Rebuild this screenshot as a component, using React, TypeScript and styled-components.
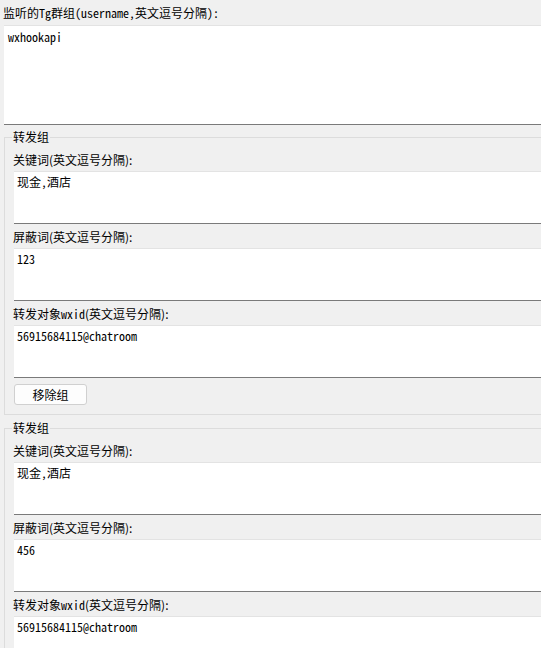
import React from 'react';
import styled, { createGlobalStyle } from 'styled-components';

const GlobalStyle = createGlobalStyle`
  html, body {
    margin: 0;
    padding: 0;
    background: #f0f0f0;
    overflow: hidden;
  }
  body {
    font-family: "Noto Sans CJK SC", sans-serif;
    font-size: 12px;
    color: #000;
  }
`;

const MONO = `"Noto Sans Mono CJK SC", "Noto Sans CJK SC", "Liberation Mono", monospace`;

const Page = styled.div`
  width: 580px;
  padding-left: 4px;
`;

const TopLabel = styled.div`
  height: 25px;
  line-height: 25px;
  margin-left: -1px;
  font-family: ${MONO};
  white-space: nowrap;
`;

const TextBox = styled.div<{ $height: number; $pad: string }>`
  box-sizing: border-box;
  height: ${(p) => p.$height}px;
  background: #fff;
  border-top: 1px solid #e3e3e3;
  border-bottom: 1px solid #7a7a7a;
  padding: ${(p) => p.$pad};
  line-height: 16px;
  font-family: ${MONO};
  white-space: pre;
`;

const Group = styled.fieldset`
  margin: 4px 0 5px 0;
  border: 1px solid #dcdcdc;
  padding: 2px 0 9px 9px;
  min-width: 0;
`;

const Legend = styled.legend`
  margin-left: -2px;
  padding: 0 1px;
  line-height: 16px;
  font-size: 12px;
`;

const Label = styled.div`
  height: 24px;
  line-height: 25px;
  margin-left: -1px;
  white-space: nowrap;
`;

const Latin = styled.span`
  font-family: ${MONO};
`;

const RemoveButton = styled.button`
  display: block;
  box-sizing: border-box;
  margin-top: 6px;
  width: 73px;
  height: 21px;
  padding: 0;
  background: #fdfdfd;
  border: 1px solid #d0d0d0;
  border-radius: 3px;
  font-family: "Noto Sans CJK SC", sans-serif;
  font-size: 12px;
  color: #000;
`;

type GroupData = { keywords: string; blocked: string; target: string };

const groups: GroupData[] = [
  { keywords: '现金,酒店', blocked: '123', target: '56915684115@chatroom' },
  { keywords: '现金,酒店', blocked: '456', target: '56915684115@chatroom' },
];

const ForwardGroup: React.FC<{ data: GroupData }> = ({ data }) => (
  <Group>
    <Legend>转发组</Legend>
    <Label>关键词(英文逗号分隔):</Label>
    <TextBox $height={53} $pad="2px 3px">{data.keywords}</TextBox>
    <Label>屏蔽词(英文逗号分隔):</Label>
    <TextBox $height={53} $pad="2px 3px">{data.blocked}</TextBox>
    <Label>
      转发对象<Latin>wxid</Latin>(英文逗号分隔):
    </Label>
    <TextBox $height={53} $pad="2px 3px">{data.target}</TextBox>
    <RemoveButton>移除组</RemoveButton>
  </Group>
);

export default function App() {
  return (
    <Page>
      <GlobalStyle />
      <TopLabel>监听的Tg群组(username,英文逗号分隔):</TopLabel>
      <TextBox $height={100} $pad="3px 4px">wxhookapi</TextBox>
      {groups.map((g, i) => (
        <ForwardGroup key={i} data={g} />
      ))}
    </Page>
  );
}
